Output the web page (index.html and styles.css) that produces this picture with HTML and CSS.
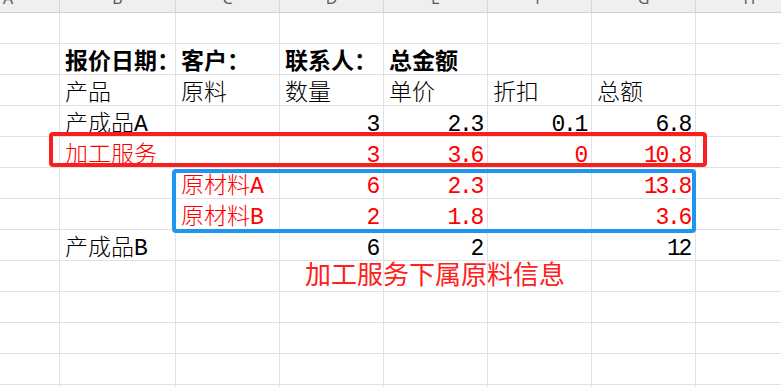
FILE: index.html
```html
<!DOCTYPE html>
<html lang="zh-CN">
<head>
<meta charset="utf-8">
<title>报价单</title>
<link rel="stylesheet" href="styles.css">
</head>
<body>
<div class="sheet">
  <div class="grid">
    <div class="h h-a"><span>A</span></div><div class="h"><span>B</span></div><div class="h"><span>C</span></div><div class="h"><span>D</span></div><div class="h"><span>E</span></div><div class="h"><span>F</span></div><div class="h"><span>G</span></div><div class="h"><span>H</span></div>

    <div class="c"></div><div class="c"></div><div class="c"></div><div class="c"></div><div class="c"></div><div class="c"></div><div class="c"></div><div class="c"></div>

    <div class="c"></div><div class="c b">报价日期：</div><div class="c b">客户：</div><div class="c b">联系人：</div><div class="c b">总金额</div><div class="c"></div><div class="c"></div><div class="c"></div>

    <div class="c"></div><div class="c">产品</div><div class="c">原料</div><div class="c">数量</div><div class="c">单价</div><div class="c">折扣</div><div class="c">总额</div><div class="c"></div>

    <div class="c"></div><div class="c">产成品<span class="hw">A</span></div><div class="c"></div><div class="c r"><span class="hw">3</span></div><div class="c r"><span class="hw">2.3</span></div><div class="c r"><span class="hw">0.1</span></div><div class="c r"><span class="hw">6.8</span></div><div class="c"></div>

    <div class="c"></div><div class="c red">加工服务</div><div class="c"></div><div class="c r red"><span class="hw">3</span></div><div class="c r red"><span class="hw">3.6</span></div><div class="c r red"><span class="hw">0</span></div><div class="c r red"><span class="hw">10.8</span></div><div class="c"></div>

    <div class="c"></div><div class="c"></div><div class="c red">原材料<span class="hw">A</span></div><div class="c r red"><span class="hw">6</span></div><div class="c r red"><span class="hw">2.3</span></div><div class="c"></div><div class="c r red"><span class="hw">13.8</span></div><div class="c"></div>

    <div class="c"></div><div class="c"></div><div class="c red">原材料<span class="hw">B</span></div><div class="c r red"><span class="hw">2</span></div><div class="c r red"><span class="hw">1.8</span></div><div class="c"></div><div class="c r red"><span class="hw">3.6</span></div><div class="c"></div>

    <div class="c"></div><div class="c">产成品<span class="hw">B</span></div><div class="c"></div><div class="c r"><span class="hw">6</span></div><div class="c r"><span class="hw">2</span></div><div class="c"></div><div class="c r"><span class="hw">12</span></div><div class="c"></div>

    <div class="c"></div><div class="c"></div><div class="c"></div><div class="c"></div><div class="c"></div><div class="c"></div><div class="c"></div><div class="c"></div>
    <div class="c"></div><div class="c"></div><div class="c"></div><div class="c"></div><div class="c"></div><div class="c"></div><div class="c"></div><div class="c"></div>
    <div class="c"></div><div class="c"></div><div class="c"></div><div class="c"></div><div class="c"></div><div class="c"></div><div class="c"></div><div class="c"></div>
    <div class="c"></div><div class="c"></div><div class="c"></div><div class="c"></div><div class="c"></div><div class="c"></div><div class="c"></div><div class="c"></div>
    <div class="c"></div><div class="c"></div><div class="c"></div><div class="c"></div><div class="c"></div><div class="c"></div><div class="c"></div><div class="c"></div>
  </div>

  <div class="mark mark-red"></div>
  <div class="mark mark-blue"></div>
  <div class="note">加工服务下属原料信息</div>
</div>
</body>
</html>
```

FILE: styles.css
```css
html, body {
  margin: 0;
  padding: 0;
  background: #ffffff;
  overflow: hidden;
}

.sheet {
  position: relative;
  width: 781px;
  height: 387px;
  overflow: hidden;
}

.grid {
  display: grid;
  grid-template-columns: 60px 116px 104px 104px 104px 104px 104px 108px;
  grid-template-rows: 13px repeat(13, 31px);
}

.h {
  box-sizing: border-box;
  background: #efefef;
  border-right: 1px solid #d9d9d9;
  border-bottom: 1px solid #d2d2d2;
  display: flex;
  align-items: flex-end;
  justify-content: center;
  overflow: hidden;
}

.h span {
  font-family: "Open Sans", "Liberation Sans", sans-serif;
  font-size: 16px;
  line-height: 16px;
  color: #555555;
  margin-bottom: 6px;
}

.h-a {
  justify-content: flex-start;
  padding-left: 3px;
}

.c {
  box-sizing: border-box;
  border-right: 1px solid #e1e1e1;
  border-bottom: 1px solid #e1e1e1;
  padding: 0 5px;
  font-family: "Noto Sans CJK SC", sans-serif;
  font-weight: 300;
  font-size: 23px;
  line-height: 31px;
  color: #000000;
  white-space: nowrap;
}

.b {
  font-weight: 700;
}

.r {
  text-align: right;
  padding-right: 5px;
}

.red {
  color: #ff0000;
}

.hw {
  font-family: "Liberation Mono", monospace;
  font-weight: 400;
  letter-spacing: -2.3px;
}

.mark {
  position: absolute;
  box-sizing: border-box;
  border-radius: 4px;
}

.mark-red {
  left: 49px;
  top: 132px;
  width: 658px;
  height: 35px;
  border: 4px solid #fa1e1e;
}

.mark-blue {
  left: 172px;
  top: 169px;
  width: 524px;
  height: 64px;
  border: 4px solid #1e96f0;
}

.note {
  position: absolute;
  left: 305px;
  top: 260px;
  font-family: "Noto Sans CJK SC", sans-serif;
  font-size: 26px;
  line-height: 26px;
  color: #ff2020;
  white-space: nowrap;
}
```
